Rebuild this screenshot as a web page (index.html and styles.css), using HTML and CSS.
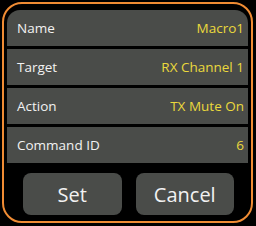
FILE: index.html
```html
<!DOCTYPE html>
<html>
<head>
<meta charset="utf-8">
<link rel="stylesheet" href="styles.css">
</head>
<body>
<div class="frame">
  <div class="rows">
    <div class="row first"><span class="label">Name</span><span class="value">Macro1</span></div>
    <div class="row"><span class="label">Target</span><span class="value">RX Channel 1</span></div>
    <div class="row"><span class="label">Action</span><span class="value">TX Mute On</span></div>
    <div class="row"><span class="label">Command ID</span><span class="value">6</span></div>
  </div>
  <div class="buttons">
    <div class="btn">Set</div>
    <div class="btn">Cancel</div>
  </div>
</div>
</body>
</html>
```
FILE: styles.css
```css
html, body {
  margin: 0;
  padding: 0;
  background: #000;
}
body {
  width: 256px;
  height: 226px;
  overflow: hidden;
  font-family: "Open Sans", "DejaVu Sans", sans-serif;
}
.frame {
  box-sizing: border-box;
  width: 251px;
  height: 221px;
  margin: 2px 0 0 2px;
  border: 2px solid #f08c34;
  border-radius: 20px;
  padding: 6px 3px 6px 3px;
  display: flex;
  flex-direction: column;
}
.rows {
  display: flex;
  flex-direction: column;
  gap: 3px;
}
.row {
  height: 36px;
  background: #4a4c49;
  display: flex;
  align-items: center;
  justify-content: space-between;
  padding: 0 4px 0 10px;
  font-size: 13.5px;
}
.row.first {
  border-radius: 13px 13px 0 0;
}
.label {
  color: #f2f2f2;
}
.value {
  color: #ead93c;
}
.buttons {
  display: flex;
  gap: 14px;
  padding: 0 14px 0 16px;
  margin-top: 10px;
}
.btn {
  flex: 1;
  height: 42px;
  background: #4a4c49;
  border-radius: 8px;
  color: #f2f2f2;
  font-size: 20px;
  display: flex;
  align-items: center;
  justify-content: center;
}
```
